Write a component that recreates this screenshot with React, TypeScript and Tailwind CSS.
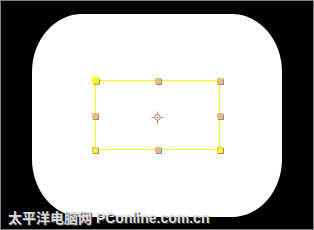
import React from "react";

const Handle = ({ dot, square }: { dot?: boolean; square?: boolean }) => {
  if (square)
    return <div className="h-[7px] w-[7px] rounded-[2px] bg-[#ffff00] shadow-[1px_1px_0_#9a8f86]" />;
  return (
    <div className="flex h-[6px] w-[6px] items-center justify-center bg-[#e9b98c] shadow-[1px_1px_0_#9a8f86]">
      {dot && <div className="h-[5px] w-[5px] rounded-full bg-[#ffff00]" />}
    </div>
  );
};

export default function App() {
  return (
    <div className="relative h-[230px] w-[314px] overflow-hidden border border-[#808080] bg-black pl-[31px] pt-[13px]">
      <div className="h-[203px] w-[250px] rounded-[50px/58px] bg-white pl-[63px] pt-[66px]">
        {/* selection frame */}
        <div className="relative flex h-[70px] w-[125px] items-center justify-center border border-[#ffff00]">
          <svg className="mt-[4px]" width="15" height="15" viewBox="0 0 15 15">
            <path
              d="M7.5 0 L8.6 6.4 L15 7.5 L8.6 8.6 L7.5 15 L6.4 8.6 L0 7.5 L6.4 6.4 Z"
              fill="#cf8f63"
            />
            <circle cx="7.5" cy="7.5" r="2.6" fill="#fff" stroke="#b07f6a" strokeWidth="0.9" />
            <circle cx="7.5" cy="7.5" r="0.8" fill="#9b6a5a" />
          </svg>

          {/* handles laid over the frame */}
          <div className="absolute inset-[-4px] flex flex-col justify-between">
            <div className="flex items-center justify-between">
              <Handle square />
              <Handle />
              <Handle />
            </div>
            <div className="flex items-center justify-between">
              <Handle />
              <Handle />
            </div>
            <div className="flex items-center justify-between">
              <Handle dot />
              <Handle />
              <Handle dot />
            </div>
          </div>
        </div>
      </div>

      <div className="absolute left-[7px] top-[209px] whitespace-nowrap text-[14px] font-bold leading-[16px] text-[#dcdcdc] [font-family:'Liberation_Sans','Noto_Sans_CJK_SC',sans-serif] [text-shadow:1px_1px_0_#444]">
        太平洋电脑网 PConline.com.cn
      </div>
    </div>
  );
}
